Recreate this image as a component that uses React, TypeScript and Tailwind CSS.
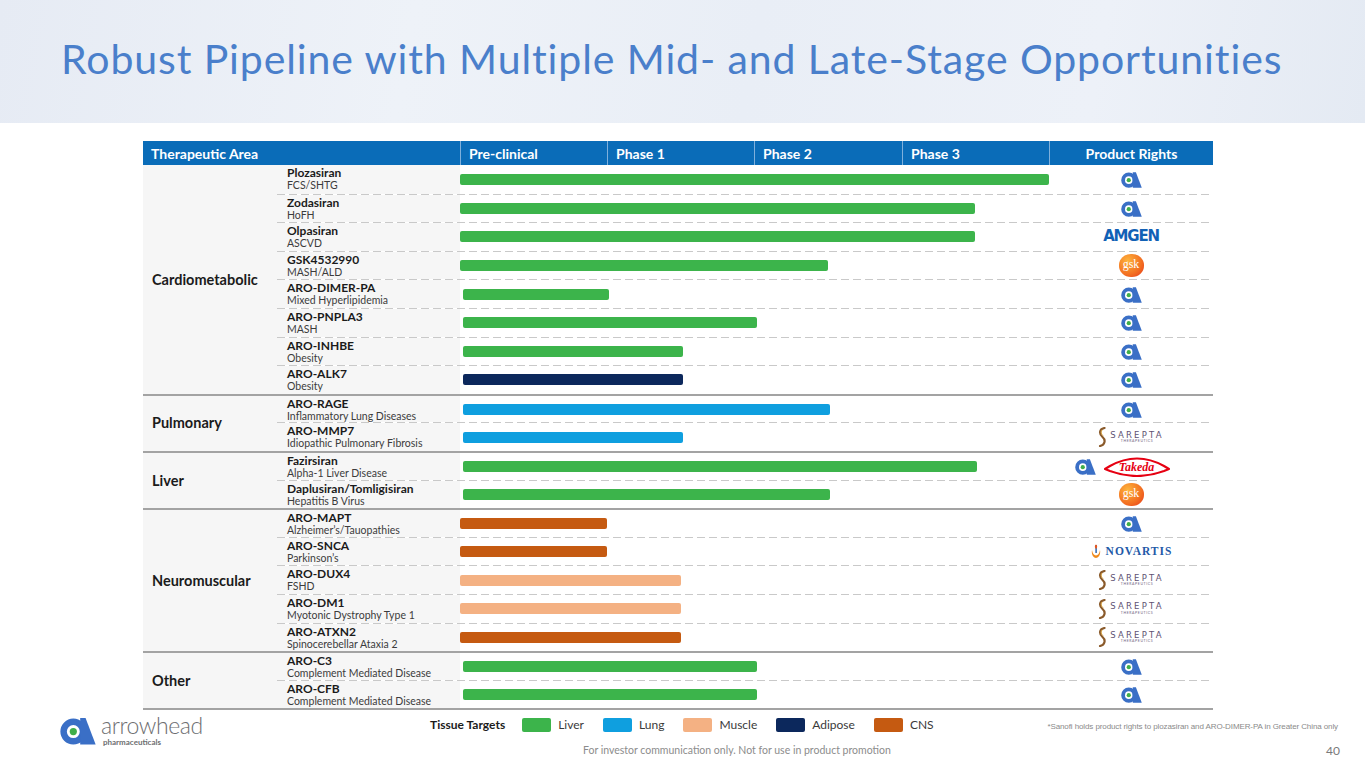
import React from 'react';

type Rights = 'arrow' | 'amgen' | 'gsk' | 'sarepta' | 'novartis' | 'takeda';

type Row = {
  name: string;
  ind: string;
  off: number;
  w: number;
  color: string;
  rights: Rights;
};

const LIVER = '#3cb44b';
const LUNG = '#0f9fdf';
const MUSCLE = '#f4b183';
const ADIPOSE = '#0c285c';
const CNS = '#c55a11';

const groups: { area: string; rows: Row[] }[] = [
  {
    area: 'Cardiometabolic',
    rows: [
      { name: 'Plozasiran', ind: 'FCS/SHTG', off: 0, w: 589, color: LIVER, rights: 'arrow' },
      { name: 'Zodasiran', ind: 'HoFH', off: 0, w: 515, color: LIVER, rights: 'arrow' },
      { name: 'Olpasiran', ind: 'ASCVD', off: 0, w: 515, color: LIVER, rights: 'amgen' },
      { name: 'GSK4532990', ind: 'MASH/ALD', off: 0, w: 368, color: LIVER, rights: 'gsk' },
      { name: 'ARO-DIMER-PA', ind: 'Mixed Hyperlipidemia', off: 3, w: 146, color: LIVER, rights: 'arrow' },
      { name: 'ARO-PNPLA3', ind: 'MASH', off: 3, w: 294, color: LIVER, rights: 'arrow' },
      { name: 'ARO-INHBE', ind: 'Obesity', off: 3, w: 220, color: LIVER, rights: 'arrow' },
      { name: 'ARO-ALK7', ind: 'Obesity', off: 3, w: 220, color: ADIPOSE, rights: 'arrow' },
    ],
  },
  {
    area: 'Pulmonary',
    rows: [
      { name: 'ARO-RAGE', ind: 'Inflammatory Lung Diseases', off: 3, w: 367, color: LUNG, rights: 'arrow' },
      { name: 'ARO-MMP7', ind: 'Idiopathic Pulmonary Fibrosis', off: 3, w: 220, color: LUNG, rights: 'sarepta' },
    ],
  },
  {
    area: 'Liver',
    rows: [
      { name: 'Fazirsiran', ind: 'Alpha-1 Liver Disease', off: 3, w: 514, color: LIVER, rights: 'takeda' },
      { name: 'Daplusiran/Tomligisiran', ind: 'Hepatitis B Virus', off: 3, w: 367, color: LIVER, rights: 'gsk' },
    ],
  },
  {
    area: 'Neuromuscular',
    rows: [
      { name: 'ARO-MAPT', ind: 'Alzheimer’s/Tauopathies', off: 0, w: 147, color: CNS, rights: 'arrow' },
      { name: 'ARO-SNCA', ind: 'Parkinson’s', off: 0, w: 147, color: CNS, rights: 'novartis' },
      { name: 'ARO-DUX4', ind: 'FSHD', off: 0, w: 221, color: MUSCLE, rights: 'sarepta' },
      { name: 'ARO-DM1', ind: 'Myotonic Dystrophy Type 1', off: 0, w: 221, color: MUSCLE, rights: 'sarepta' },
      { name: 'ARO-ATXN2', ind: 'Spinocerebellar Ataxia 2', off: 0, w: 221, color: CNS, rights: 'sarepta' },
    ],
  },
  {
    area: 'Other',
    rows: [
      { name: 'ARO-C3', ind: 'Complement Mediated Disease', off: 3, w: 294, color: LIVER, rights: 'arrow' },
      { name: 'ARO-CFB', ind: 'Complement Mediated Disease', off: 3, w: 294, color: LIVER, rights: 'arrow' },
    ],
  },
];

const legend = [
  { label: 'Liver', color: LIVER },
  { label: 'Lung', color: LUNG },
  { label: 'Muscle', color: MUSCLE },
  { label: 'Adipose', color: ADIPOSE },
  { label: 'CNS', color: CNS },
];

// arrowhead "a" mark: ring + dot + slanted stem
const ArrowMark = ({ w = 21, h = 17 }: { w?: number; h?: number }) => (
  <svg width={w} height={h} viewBox="0 0 20 16">
    <circle cx="7.4" cy="8.6" r="5.4" fill="none" stroke="#3a6fc6" strokeWidth="3.6" />
    <circle cx="7.4" cy="8.6" r="2" fill="#3fae4a" />
    <path d="M11.2 1 L14.2 1 L19.8 15.8 L11.2 15.8 Z" fill="#3a6fc6" />
  </svg>
);

const Gsk = () => (
  <div className="w-[25px] h-[23px] rounded-[48%] bg-[radial-gradient(circle_at_35%_30%,#fdb43c,#f36f21_60%,#e5361b)] flex items-center justify-center">
    <span className="text-white text-[12px] leading-none font-['Liberation_Serif',serif] -mt-[3px]">gsk</span>
  </div>
);

const Amgen = () => (
  <span className="text-[#1161b5] text-[15px] font-['DejaVu_Sans',sans-serif] font-bold tracking-[-1.2px] leading-none">
    AMGEN
  </span>
);

const Sarepta = () => (
  <div className="flex items-center gap-[3px]">
    <svg width="9" height="20" viewBox="0 0 9 20">
      <path d="M6.5 1 C1 2 1 7 4.5 10 C8 13 7 18 2 19" fill="none" stroke="#8a5a2b" strokeWidth="2.2" strokeLinecap="round" />
      <path d="M4 3 C2.5 5 3 7 5 8.5" fill="none" stroke="#d9a441" strokeWidth="1" />
    </svg>
    <div className="flex flex-col items-center leading-none">
      <span className="text-[8.5px] tracking-[2.2px] text-[#5e5273] font-['DejaVu_Sans',sans-serif]">SAREPTA</span>
      <span className="text-[3.5px] tracking-[0.6px] text-[#6e6480] mt-[1px]">THERAPEUTICS</span>
    </div>
  </div>
);

const Novartis = () => (
  <div className="flex items-center gap-[4px]">
    <svg width="12" height="15" viewBox="0 0 12 15">
      <path d="M2 6 C1 11 4 14 6 14 C8 14 11 11 10 6 C9.5 9 8 11.5 6 11.5 C4 11.5 2.5 9 2 6 Z" fill="#f08a1c" />
      <path d="M5.4 1 L6.8 1 L6.8 9 L5.4 9 Z" fill="#1f5aa8" />
      <path d="M6 0.5 C4 2 5 4 6 5 C7 4 8 2 6 0.5 Z" fill="#e9561b" />
    </svg>
    <span className="text-[#1f5aa8] text-[11.5px] font-['Liberation_Serif',serif] font-bold tracking-[1px] leading-none">
      NOVARTIS
    </span>
  </div>
);

const Takeda = () => (
  <div className="relative w-[66px] h-[22px] flex items-center justify-center">
    <svg className="absolute inset-0" width="66" height="22" viewBox="0 0 66 22">
      <path
        d="M1 14 L6 11 Q33 -4 60 11 L65 14 L60 16 Q33 26 6 16 Z"
        fill="none"
        stroke="#e60012"
        strokeWidth="2.2"
        strokeLinejoin="round"
      />
    </svg>
    <span className="relative text-[#e60012] text-[12px] font-bold italic font-['Liberation_Serif',serif] leading-none mt-[1px]">
      Takeda
    </span>
  </div>
);

const RightsLogo = ({ kind }: { kind: Rights }) => {
  switch (kind) {
    case 'amgen':
      return <Amgen />;
    case 'gsk':
      return <Gsk />;
    case 'sarepta':
      return <Sarepta />;
    case 'novartis':
      return <Novartis />;
    case 'takeda':
      return (
        <div className="flex items-center gap-[8px] -ml-[18px]">
          <ArrowMark />
          <Takeda />
        </div>
      );
    default:
      return <ArrowMark />;
  }
};

const Dashes = () => (
  <div className="h-px w-full bg-[repeating-linear-gradient(90deg,#c9c9c9_0_8px,transparent_8px_12px)]" />
);

const phases = [
  { label: 'Pre-clinical', w: 'w-[147px]' },
  { label: 'Phase 1', w: 'w-[147px]' },
  { label: 'Phase 2', w: 'w-[148px]' },
  { label: 'Phase 3', w: 'w-[147px]' },
];

export default function App() {
  return (
    <div className="w-[1365px] h-[768px] overflow-hidden bg-white font-['Lato',sans-serif] text-[#1b1b1b]">
      {/* title band */}
      <header className="h-[123px] bg-[linear-gradient(100deg,#e6ebf4_0%,#eef2f8_30%,#e9eef6_55%,#edf1f8_80%,#e4eaf3_100%)] pl-[61px] pt-[38px]">
        <h1 className="text-[41px] leading-none text-[#4a7fcb] font-normal tracking-[0.9px]">
          Robust Pipeline with Multiple Mid- and Late-Stage Opportunities
        </h1>
      </header>

      {/* pipeline table */}
      <section className="ml-[143px] mt-[18px] w-[1070px]">
        <div className="flex h-[24px] bg-[#0a6cb8] text-white text-[14px] font-bold">
          <div className="w-[317px] flex items-center pl-[8px]">Therapeutic Area</div>
          {phases.map((p) => (
            <div key={p.label} className={`${p.w} flex items-center pl-[8px] border-l border-[#7fb0dc]`}>
              {p.label}
            </div>
          ))}
          <div className="flex-1 flex items-center justify-center border-l border-[#7fb0dc]">Product Rights</div>
        </div>

        {groups.map((g, gi) => (
          <div key={g.area} className={`flex ${gi > 0 ? 'border-t-2 border-[#a3a3a3]' : ''}`}>
            <div className="w-[134px] bg-[#f6f6f6] flex items-center pl-[9px] text-[14.5px] font-bold">{g.area}</div>
            <div className="flex-1 flex flex-col">
              {g.rows.map((r, ri) => (
                <div key={r.name + ri}>
                  {ri > 0 && <Dashes />}
                  <div className={`flex ${ri > 0 ? 'h-[27.6px]' : gi > 0 ? 'h-[26.6px]' : 'h-[28.6px]'}`}>
                    <div className="w-[183px] bg-[#f6f6f6] pl-[10px] pt-[2px] flex flex-col">
                      <span className="text-[12px] leading-[12px] font-bold">{r.name}</span>
                      <span className="text-[10.5px] leading-[12px] text-[#3c3c3c]">{r.ind}</span>
                    </div>
                    <div className="w-[589px] flex items-center">
                      <div
                        className="h-[11px] rounded-[2px]"
                        style={{ marginLeft: r.off, width: r.w, background: r.color }}
                      />
                    </div>
                    <div className="flex-1 flex items-center justify-center">
                      <RightsLogo kind={r.rights} />
                    </div>
                  </div>
                </div>
              ))}
            </div>
          </div>
        ))}
        <div className="h-[2px] bg-[#a3a3a3]" />
      </section>

      {/* footer */}
      <footer className="flex h-[57px]">
        <div className="w-[430px] pl-[60px] pt-[6px] flex items-start gap-[5px]">
          <ArrowMark w={36} h={29} />
          <div className="flex flex-col leading-none -mt-[2px]">
            <span className="text-[23px] text-[#6d6e71] font-light tracking-[-0.4px]">arrowhead</span>
            <span className="text-[8px] text-[#6d6e71] font-bold pl-[2px] mt-[1px]">pharmaceuticals</span>
          </div>
        </div>
        <div className="flex-1 flex flex-col">
          <div className="flex items-center h-[29px]">
            <span className="text-[12px] font-bold mr-[17px]">Tissue Targets</span>
            {legend.map((l) => (
              <div key={l.label} className="flex items-center mr-[19px]">
                <div className="w-[29px] h-[14px] rounded-[2px]" style={{ background: l.color }} />
                <span className="text-[12px] text-[#3a3a3a] ml-[7px]">{l.label}</span>
              </div>
            ))}
            <span className="ml-auto pr-[27px] pt-[4px] text-[8px] text-[#8a8a8a] font-['Liberation_Sans',sans-serif] tracking-[-0.1px]">
              *Sanofi holds product rights to plozasiran and ARO-DIMER-PA in Greater China only
            </span>
          </div>
          <div className="flex items-center h-[14px] mt-[5px]">
            <span className="pl-[153px] text-[10.5px] text-[#8c8c8c]">
              For investor communication only. Not for use in product promotion
            </span>
            <span className="ml-auto pr-[25px] text-[12px] text-[#7a7a7a]">40</span>
          </div>
        </div>
      </footer>
    </div>
  );
}
